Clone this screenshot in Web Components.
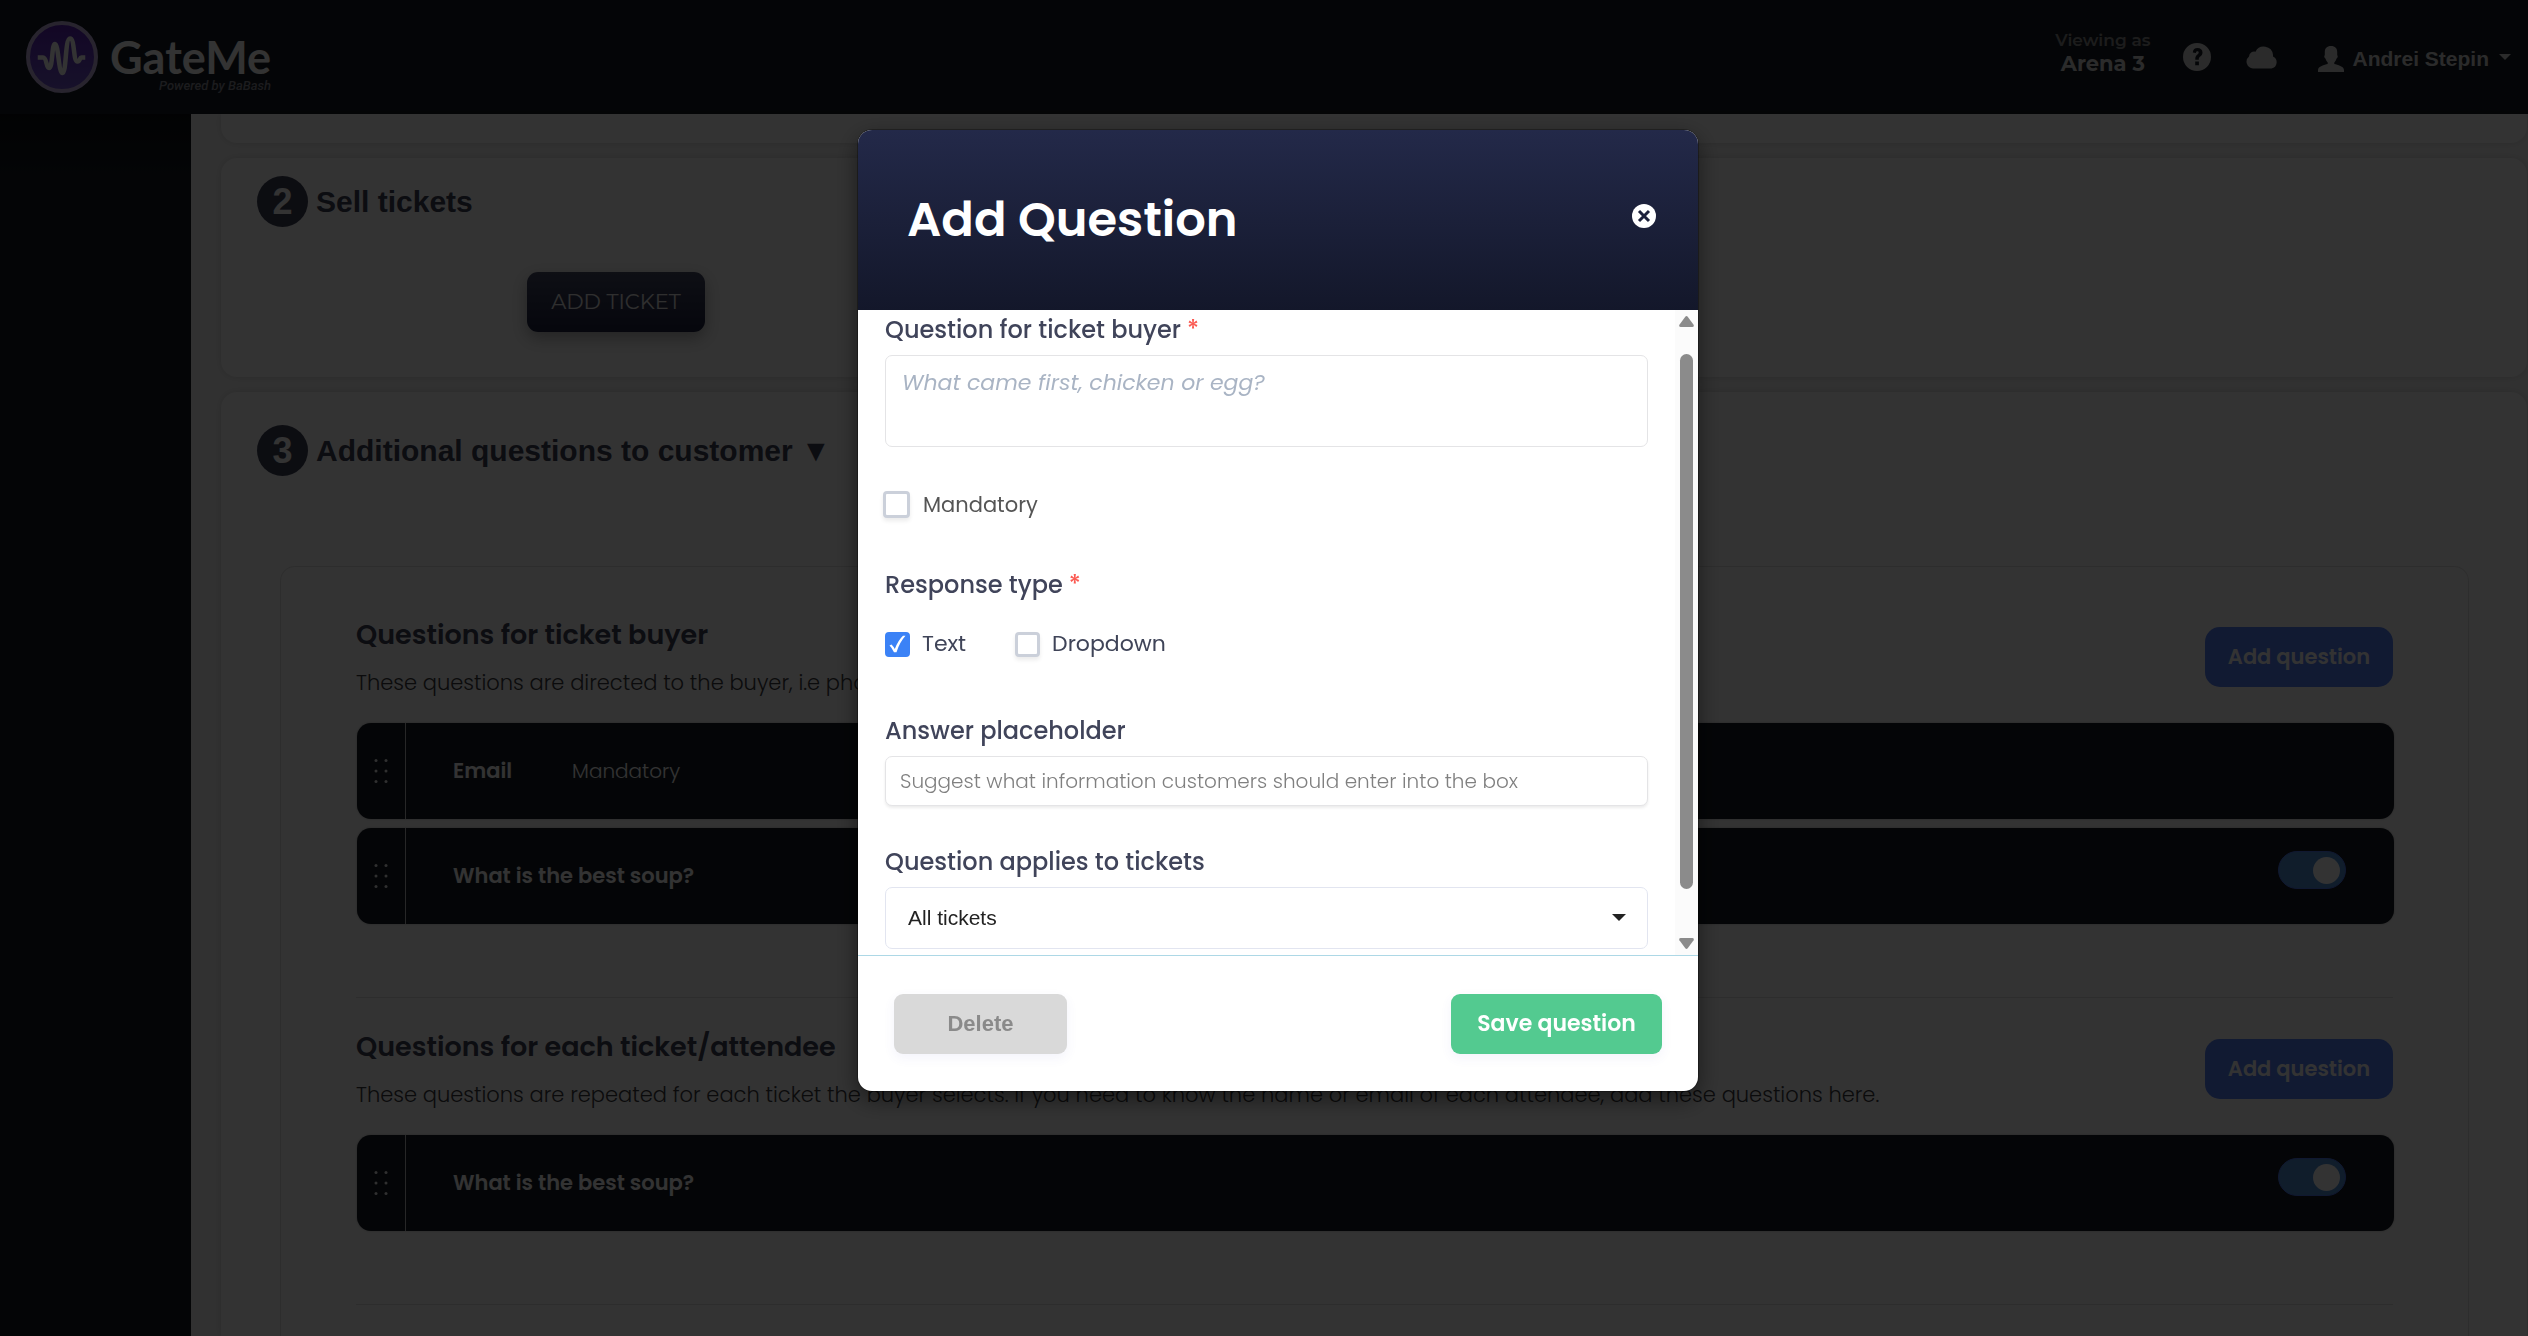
<!DOCTYPE html>
<html lang="en">
<head>
<meta charset="utf-8">
<meta name="viewport" content="width=device-width, initial-scale=1">
<title>GateMe</title>
<style>
:root{
  --poppins:"Poppins","Inter",sans-serif;
  --montserrat:"Montserrat","Inter",sans-serif;
  --arial:"Liberation Sans",Arial,sans-serif;
  --ink:#3d4158;
}
html,body{margin:0;height:100%;overflow:hidden}
body{font-family:var(--arial);background:#f6f6f6}
</style>
</head>
<body>
<gm-app></gm-app>
<script>
function define(name, html, setup){
  const t = document.createElement('template');
  t.innerHTML = html;
  customElements.define(name, class extends HTMLElement{
    constructor(){
      super();
      this.attachShadow({mode:'open'}).appendChild(t.content.cloneNode(true));
    }
    connectedCallback(){ if(setup) setup(this, this.shadowRoot); }
  });
}

define('gm-logo', `
<style>
:host{display:flex;gap:12px;align-items:flex-start}
svg{width:72px;height:72px;flex:none}
.words{display:flex;flex-direction:column;align-items:flex-end;padding-top:14px}
.name{font:700 45px/44px Lato,sans-serif;color:#fff}
.by{font:italic 500 13px/14px Roboto,sans-serif;color:#8a8a96}
</style>
<svg viewBox="0 0 72 72" aria-hidden="true">
  <defs><linearGradient id="g" x1="0" y1="0" x2="0" y2="1"><stop offset="0" stop-color="#5c20b8"/><stop offset="1" stop-color="#7458d2"/></linearGradient></defs>
  <circle cx="36" cy="36" r="34" fill="url(#g)" stroke="#c6b6e6" stroke-width="4"/>
  <path d="M14 36.500h3c4 0 3 10.500 6 10.500 4 0 2.500-24 6-24s3.500 29 7.500 29S39 17.500 44 17.500s3 23 7.500 23c2.500 0 2-4 4-4H57" fill="none" stroke="#fff" stroke-width="4.500" stroke-linecap="square" stroke-linejoin="round"/>
</svg>
<div class="words"><span class="name">GateMe</span><span class="by">Powered by BaBash</span></div>`);

define('gm-header', `
<style>
:host{display:flex;justify-content:space-between;height:114px;background:#161c24;padding:0 17px 0 26px;flex:none}
gm-logo{margin-top:21px}
.right{display:flex;align-items:center;color:#d6d6d6}
.venue{font:700 21px/24px var(--montserrat);text-align:center;padding-bottom:10px;margin-right:33px}
.venue small{display:block;font:600 17px/24px var(--montserrat);color:#8e8e8e}
a{display:block;color:inherit;text-decoration:none}
svg{display:block;fill:currentColor}
.help{margin-right:35px}
.cloud{margin-right:40px}
.user{display:flex;align-items:center;gap:8px;padding-top:4px;font:700 21px/24px var(--arial)}
.caret{margin-left:2px;margin-bottom:5px}
</style>
<gm-logo></gm-logo>
<div class="right">
  <div class="venue"><small>Viewing as</small>Arena 3</div>
  <a class="help" href="#" aria-label="Help"><svg width="28" height="28" viewBox="0 0 28 28"><path fill-rule="evenodd" d="M14 0a14 14 0 1 0 0 28 14 14 0 0 0 0-28zM9.800 9.400C10 6.500 11.800 5 14.500 5c2.900 0 5 1.600 5 4.400 0 2-1 3-2.200 4-1.100.900-1.500 1.300-1.500 2.600v.700h-3.500v-1c0-2.200.900-3.200 2.100-4.200.900-.700 1.300-1.100 1.300-1.900s-.500-1.300-1.300-1.300c-.900 0-1.400.600-1.500 1.700zM12.200 18.600h3.700v3.600h-3.700z"/></svg></a>
  <a class="cloud" href="#" aria-label="Cloud"><svg width="32" height="23" viewBox="0 0 32 23"><path d="M7 22.500a6.800 6.800 0 0 1-4-12 5.200 5.200 0 0 1 6.500-4.800A9.300 9.300 0 0 1 27 8.800v1.800a6.300 6.300 0 0 1-1.500 11.900z"/></svg></a>
  <a class="user" href="#"><svg width="26" height="26" viewBox="0 0 26 26"><path d="M13 0c4.200 0 6.200 2.500 6.200 6v3.200c.9.200.7 2.800-.6 3.300-.5 1.700-1.300 3-2.300 3.900v1.500c3.200.900 9.700 2.100 9.700 6.100v2H0v-2c0-4 6.500-5.200 9.700-6.100v-1.500c-1-.9-1.800-2.200-2.300-3.900-1.300-.5-1.500-3.100-.6-3.300V6c0-3.500 2-6 6.200-6z"/></svg>Andrei Stepin<svg class="caret" width="12" height="6" viewBox="0 0 12 6"><path d="M0 0h12L6 6z"/></svg></a>
</div>`);

define('gm-step', `
<style>
:host{display:block;flex:none;background:#fdfdfd;border-radius:16px;box-shadow:0 0 8px rgba(0,0,0,.14);padding:18px 36px 45px}
:host([flush]){border-radius:0 0 16px 16px;padding:0;height:29px}
:host([last]){padding:33px 58px 0 36px;border-radius:16px 16px 0 0;flex:1 0 auto}
:host([flush]) .head{display:none}
.head{display:flex;align-items:center;gap:8px}
.num{width:51px;height:51px;border-radius:50%;background:var(--ink);color:#fdfdfd;font:700 36px/51px var(--arial);text-align:center}
h2{margin:0;font:700 30px/51px var(--arial);color:var(--ink)}
</style>
<div class="head"><span class="num"></span><h2><slot name="title"></slot></h2></div>
<slot></slot>`, (h, r) => { r.querySelector('.num').textContent = h.getAttribute('number') || ''; });

define('gm-question', `
<style>
:host{display:flex;height:96px;background:#161c24;border-radius:14px;box-shadow:0 0 2px rgba(0,0,0,.3)}
.grip{width:48px;border-right:1px solid #c4c4c4;display:flex;align-items:center;justify-content:center}
.body{flex:1;display:flex;align-items:center;gap:60px;padding-left:47px;color:#fff;font:600 21px/32px var(--poppins)}
.note{font-weight:300;font-size:20px}
.note:empty{display:none}
.switch{margin:23px 48px 0 0;height:38px}
input{appearance:none;margin:0;width:68px;height:38px;border-radius:19px;background:#4f90d6;border:1px solid #5078f0;padding:5px;display:flex;justify-content:flex-end;box-sizing:border-box}
input::before{content:"";width:27px;height:27px;border-radius:50%;background:#fdfdfd}
:host(:not([toggle])) .switch{display:none}
</style>
<div class="grip"><svg width="16" height="26" viewBox="0 0 16 26" fill="#f0f0f0"><circle cx="3" cy="2.500" r="1.500"/><circle cx="13" cy="2.500" r="1.500"/><circle cx="3" cy="13" r="1.500"/><circle cx="13" cy="13" r="1.500"/><circle cx="3" cy="23.500" r="1.500"/><circle cx="13" cy="23.500" r="1.500"/></svg></div>
<div class="body"><slot></slot><span class="note"></span></div>
<label class="switch"><input type="checkbox" checked aria-label="Question enabled"></label>`,
(h, r) => { r.querySelector('.note').textContent = h.getAttribute('note') || ''; });

define('gm-question-group', `
<style>
:host{display:block;padding-bottom:73px;border-bottom:1px solid #e2e2e2}
:host(:not(:first-child)){padding-top:29px}
.head{display:flex;justify-content:space-between;margin-bottom:24px}
h3{margin:0 0 12px;font:600 27px/40px var(--poppins);color:var(--ink)}
p{margin:0;font:300 21px/32px var(--poppins);color:#3a3a3e}
button{margin-top:12px;width:188px;height:60px;border:0;border-radius:15px;background:#5580fa;color:#fff;font:600 21px/32px var(--poppins);padding:0;flex:none}
.rows{display:flex;flex-direction:column;gap:9px;margin:0 -1px 0 1px}
</style>
<div class="head"><div><h3><slot name="title"></slot></h3><p><slot name="text"></slot></p></div><button type="button">Add question</button></div>
<div class="rows"><slot></slot></div>`);

define('gm-field', `
<style>
:host{display:flex;flex-direction:column}
.label{font:500 24px/36px var(--poppins);color:#40445a}
b{font-weight:500;color:#fb5a52;margin-left:6px}
:host(:not([required])) b{display:none}
label{display:block}
textarea,input,select{box-sizing:border-box;width:100%;margin:7px 0 0;display:block;background:#fff;border:1px solid #e4e4e6;border-radius:7px;outline:0}
textarea{height:92px;resize:none;padding:10px 16px;font:400 22px/34px var(--poppins)}
textarea::placeholder{color:#a9b4c4;font-style:italic;opacity:1}
input{height:50px;padding:0 14px;font:300 20px/28px var(--poppins);box-shadow:0 2px 3px rgba(0,0,0,.08)}
input::placeholder{color:#808080;opacity:1}
.pick{display:grid;align-items:center}
.pick>*{grid-area:1/1}
select{appearance:none;height:62px;padding:0 22px;border-color:#e2e5f0;font:400 21px/28px var(--arial);color:#222}
.pick svg{justify-self:end;margin:5px 22px 0 0;pointer-events:none}
</style>
<label><span class="label"><slot></slot><b>*</b></span><span class="control"></span></label>`,
(h, r) => {
  const c = r.querySelector('.control'), k = h.getAttribute('kind'), p = h.getAttribute('placeholder') || '';
  if(k === 'area') c.innerHTML = '<textarea></textarea>';
  else if(k === 'select') c.innerHTML = '<span class="pick"><select><option>All tickets</option></select><svg width="14" height="7" viewBox="0 0 14 7"><path d="M0 0h14L7 7z" fill="#222"/></svg></span>';
  else c.innerHTML = '<input type="text">';
  if(k !== 'select') c.firstElementChild.placeholder = p;
});

define('gm-check', `
<style>
:host{display:block;color:#3f4458;font:400 22px/26px var(--poppins)}
:host([large]){color:#555;font-size:21px;margin-left:-2px}
label{display:flex;align-items:center;gap:12px}
:host([large]) label{gap:13px}
.box{display:grid;place-items:center}
.box>*{grid-area:1/1}
input{appearance:none;box-sizing:border-box;margin:0;width:25px;height:25px;border:3px solid #cbd0da;border-radius:4px;background:#fff;box-shadow:0 3px 4px rgba(0,0,0,.08)}
:host([large]) input{width:27px;height:27px}
input:checked{background:#3b82f6;border-color:#3b82f6;box-shadow:none}
svg{display:none;pointer-events:none}
input:checked+svg{display:block}
</style>
<label><span class="box"><input type="checkbox"><svg width="17" height="18" viewBox="0 0 17 18"><path d="M0.500 10.500 2.500 9.500Q4.500 11.500 5.800 14Q9 5.500 14 0.800L16.500 0.800Q10.500 7.500 7.500 17.200L5 17.200Q3 13 .500 10.500z" fill="#fff"/></svg></span><slot></slot></label>`,
(h, r) => { r.querySelector('input').checked = h.hasAttribute('checked'); });

define('gm-scrollbar', `
<style>
:host{display:flex;flex-direction:column;align-items:center;width:23px;background:#fbfbfb;padding:6px 0;box-sizing:border-box}
svg{display:block;fill:#8b8b8b;flex:none}
.track{flex:1;align-self:stretch;display:flex;flex-direction:column;align-items:center;padding:27px 0 49px}
.thumb{width:13px;flex:1;border-radius:7px;background:#8b8b8b}
</style>
<svg width="15" height="11" viewBox="0 0 15 11"><path d="M6.300.8q1.200-1.600 2.400 0l5.900 8q.8 2.200-1.400 2.200H1.800Q-.4 11 .4 8.800z"/></svg>
<div class="track"><div class="thumb"></div></div>
<svg width="15" height="11" viewBox="0 0 15 11"><path d="M6.300 10.200q1.200 1.600 2.400 0l5.900-8Q15.400 0 13.200 0H1.800Q-.4 0 .4 2.200z"/></svg>`);

define('gm-dialog', `
<style>
:host{display:flex;flex-direction:column;width:840px;border-radius:14px;overflow:hidden;background:#fff;box-shadow:0 0 0 1px rgba(0,0,0,.3),0 8px 24px rgba(0,0,0,.5)}
header{height:180px;display:flex;align-items:center;justify-content:space-between;padding:0 42px 0 49px;background:linear-gradient(#232949,#13172a);box-sizing:border-box}
h1{margin:0;font:600 48px/72px var(--poppins);color:#fff}
.close{border:0;background:none;padding:0 0 9px}
.close svg{display:block}
.body{display:flex;height:645px}
form{flex:1;padding:2px 27px 0;display:flex;flex-direction:column}
.mandatory{margin-top:44px}
.response{margin-top:49px}
.legend{font:500 24px/36px var(--poppins);color:#40445a}
.legend b{font-weight:500;color:#fb5a52;margin-left:6px}
fieldset{border:0;margin:0;padding:0}
.choices{display:flex;gap:49px;margin-top:28px}
.answer{margin-top:56px}
.tickets{margin-top:38px}
footer{display:flex;justify-content:space-between;border-top:1px solid #add8e6;padding:38px 36px 37px}
footer button{height:60px;border:0;border-radius:9px;padding:0;box-shadow:0 4px 12px rgba(80,80,200,.07)}
.del{width:173px;background:#d9d9d9;color:#8a8a8a;font:700 22px/32px var(--arial)}
.save{width:211px;background:#53ca90;color:#fff;font:600 22px/32px var(--poppins)}
</style>
<header><h1>Add Question</h1><button class="close" type="button" aria-label="Close"><svg width="24" height="24" viewBox="0 0 24 24"><circle cx="12" cy="12" r="12" fill="#fff"/><path d="m7 7 10 10m0-10-10 10" stroke="#1c213b" stroke-width="3"/></svg></button></header>
<div class="body">
  <form>
    <gm-field kind="area" required placeholder="What came first, chicken or egg?">Question for ticket buyer</gm-field>
    <gm-check class="mandatory" large>Mandatory</gm-check>
    <fieldset class="response"><div class="legend">Response type<b>*</b></div>
      <div class="choices"><gm-check checked>Text</gm-check><gm-check>Dropdown</gm-check></div></fieldset>
    <gm-field class="answer" placeholder="Suggest what information customers should enter into the box">Answer placeholder</gm-field>
    <gm-field class="tickets" kind="select">Question applies to tickets</gm-field>
  </form>
  <gm-scrollbar></gm-scrollbar>
</div>
<footer><button class="del" type="button">Delete</button><button class="save" type="button">Save question</button></footer>`);

define('gm-app', `
<style>
:host{display:flex;flex-direction:column;height:100vh;overflow:hidden}
.page{flex:1;display:flex;min-height:0}
nav{width:191px;flex:none;background:linear-gradient(#0c0e12,#141a21 60px)}
main{flex:1;min-width:0;display:flex;flex-direction:column;gap:15px;padding:0 1px 0 30px}
.add{display:block;margin:45px 0 0 270px;width:178px;height:60px;border:0;border-radius:11px;background:linear-gradient(#464b68,#1e2240);box-shadow:0 6px 16px rgba(0,0,0,.3);color:#e8e8e8;font:400 21px/30px var(--montserrat)}
.panel{margin:90px 0 0 23px;border:1px solid #e2e2e2;border-bottom:0;border-radius:15px 15px 0 0;padding:48px 75px 31px}
.backdrop{position:fixed;inset:0;background:rgba(0,0,0,.8);display:flex;justify-content:center;align-items:flex-start;padding:130px 0 0 28px}
</style>
<gm-header></gm-header>
<div class="page">
  <nav></nav>
  <main>
    <gm-step flush></gm-step>
    <gm-step number="2"><span slot="title">Sell tickets</span><button class="add" type="button">ADD TICKET</button></gm-step>
    <gm-step number="3" last><span slot="title">Additional questions to customer ▼</span>
      <div class="panel">
        <gm-question-group><span slot="title">Questions for ticket buyer</span><span slot="text">These questions are directed to the buyer, i.e phone</span>
          <gm-question note="Mandatory">Email</gm-question>
          <gm-question toggle>What is the best soup?</gm-question>
        </gm-question-group>
        <gm-question-group><span slot="title">Questions for each ticket/attendee</span><span slot="text">These questions are repeated for each ticket the buyer selects. If you need to know the name or email of each attendee, add these questions here.</span>
          <gm-question toggle>What is the best soup?</gm-question>
        </gm-question-group>
      </div>
    </gm-step>
  </main>
</div>
<div class="backdrop"><gm-dialog role="dialog" aria-label="Add Question"></gm-dialog></div>`);
</script>
</body>
</html>
